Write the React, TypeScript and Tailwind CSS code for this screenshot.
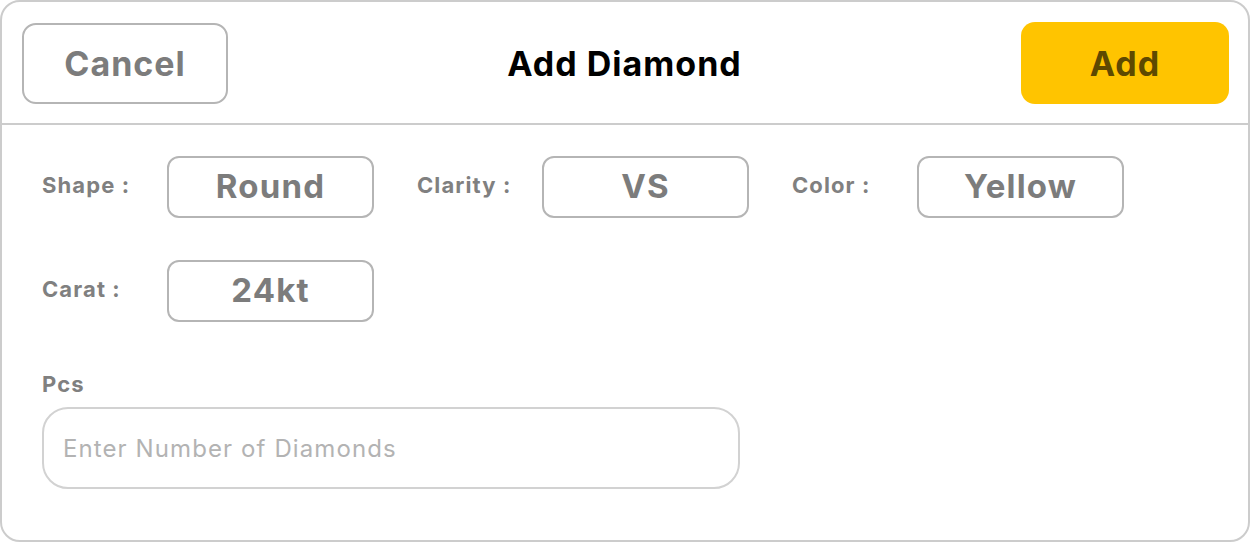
import React from "react";

const font = { fontFamily: "Inter, 'Noto Sans', sans-serif" };

function Field({ label, value }: { label: string; value: string }) {
  return (
    <div className="flex items-center w-[375px]">
      <div className="w-[125px] text-[22px] font-bold text-[#808080] leading-none -mt-[4px] tracking-[1.1px] whitespace-nowrap">
        {label}
      </div>
      <div className="w-[207px] h-[62px] rounded-[12px] border-2 border-[#b5b5b5] flex items-center justify-center text-[33px] font-bold text-[#7c7c7c] tracking-[1.2px]">
        {value}
      </div>
    </div>
  );
}

export default function App() {
  return (
    <div style={font} className="w-[1250px] h-[542px] bg-white">
      <div className="w-[1250px] h-[542px] border-2 border-[#cccccc] rounded-[20px] flex flex-col overflow-hidden">
        <div className="flex items-center justify-between px-[20px] pt-[20px] pb-[19px] border-b-2 border-[#cccccc]">
          <button className="w-[206px] h-[81px] rounded-[14px] border-2 border-[#b5b5b5] text-[34px] font-bold text-[#7c7c7c] tracking-[1px] flex items-center justify-center">
            Cancel
          </button>
          <div className="text-[34px] font-bold text-black tracking-[1px]">Add Diamond</div>
          <button className="w-[208px] h-[82px] rounded-[14px] bg-[#ffc400] text-[34px] font-bold text-[#5e4900] tracking-[1px] flex items-center justify-center -mr-[1px]">
            Add
          </button>
        </div>
        <div className="flex flex-col pl-[40px] pt-[31px]">
          <div className="flex">
            <Field label="Shape :" value="Round" />
            <Field label="Clarity :" value="VS" />
            <Field label="Color :" value="Yellow" />
          </div>
          <div className="flex mt-[42px]">
            <Field label="Carat :" value="24kt" />
          </div>
          <div className="mt-[51px] text-[22px] font-bold text-[#808080] leading-none tracking-[1.1px]">Pcs</div>
          <input
            placeholder="Enter Number of Diamonds"
            className="mt-[12px] w-[698px] h-[82px] rounded-[26px] border-2 border-[#d2d2d2] px-[19px] text-[24px] tracking-[1.1px] text-[#555] placeholder:text-[#b3b3b3] outline-none"
            style={font}
          />
        </div>
      </div>
    </div>
  );
}
